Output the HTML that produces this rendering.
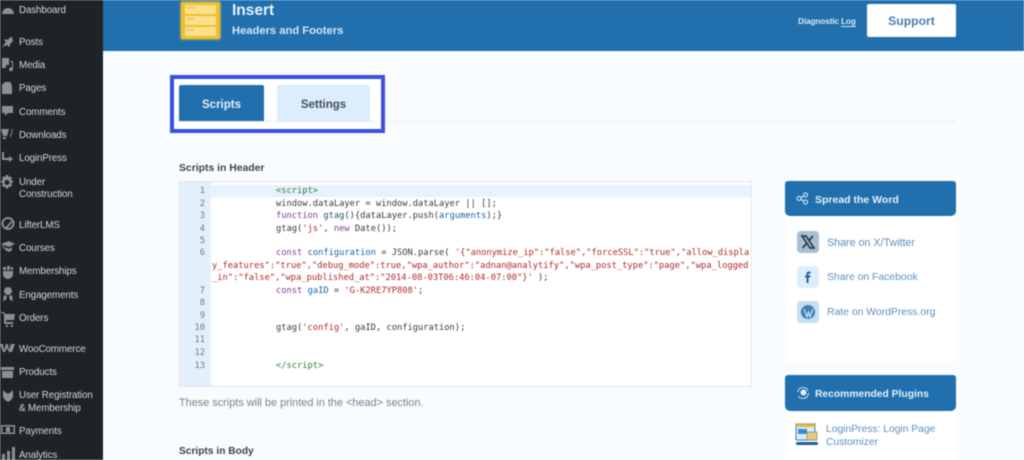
<!DOCTYPE html>
<html><head><meta charset="utf-8"><style>
html,body{margin:0;padding:0}
body{width:1024px;height:460px;overflow:hidden;position:relative;background:#f8fcff;font-family:"Liberation Sans",sans-serif}
#w{position:absolute;left:0;top:0;width:1024px;height:460px;overflow:hidden;filter:blur(.45px)}
.a,.m,.c,.n{position:absolute;white-space:nowrap}
.m{left:19px;color:#d3d6d9;font-size:9.8px;line-height:12px;margin-top:2px;letter-spacing:-.12px}
.c{font-family:"DejaVu Sans Mono","Liberation Mono",monospace;font-size:8.74px;line-height:12px;color:#3a3a3a;margin-top:1px}
.n{left:180px;width:25px;text-align:right;font-family:"DejaVu Sans Mono",monospace;font-size:8.74px;line-height:12px;color:#777;margin-top:1px}
.k{color:#7a3d9a}.d{color:#1a62a8}.s{color:#b02a2a}.t{color:#2a7d3a}.v{color:#256}
.l{position:absolute;left:827px;color:#5b8fc0;font-size:10.6px;line-height:13px;white-space:nowrap}
.ib{position:absolute;left:797px;width:22px;height:22px;border-radius:4px}
</style></head><body><div id="w">
<!-- sidebar -->
<div class="a" style="left:0;top:0;width:103px;height:460px;background:#1d2327"></div>
<div class="m" style="top:3px">Dashboard</div>
<div class="m" style="top:35px">Posts</div>
<div class="m" style="top:58px">Media</div>
<div class="m" style="top:81px">Pages</div>
<div class="m" style="top:105px">Comments</div>
<div class="m" style="top:128px">Downloads</div>
<div class="m" style="top:151px">LoginPress</div>
<div class="m" style="top:175px">Under</div>
<div class="m" style="top:187px">Construction</div>
<div class="m" style="top:218px">LifterLMS</div>
<div class="m" style="top:241px">Courses</div>
<div class="m" style="top:264px">Memberships</div>
<div class="m" style="top:288px">Engagements</div>
<div class="m" style="top:311px">Orders</div>
<div class="m" style="top:342px">WooCommerce</div>
<div class="m" style="top:365px">Products</div>
<div class="m" style="top:388px">User Registration</div>
<div class="m" style="top:401px">&amp; Membership</div>
<div class="m" style="top:424px">Payments</div>
<div class="m" style="top:448px">Analytics</div>
<svg class="a" style="left:0;top:0" width="16" height="460" fill="#8b9096">
<path d="M2 14a6 6 0 1 1 12 0z"/>
<path d="M2 47l4-5-2-2 1-1 2 1 4-3 1 0 1 4-3 3 0 2-1 1-2-2z"/>
<path d="M2 58h7v7H6v3H2zM10 61h3v8a2 2 0 1 1-1-1.500V62h-2z"/>
<path d="M4 82h7v3h1v9H4zM2 84h2v9h6v1H2z" />
<path d="M2 106h11v7H8l-3 3v-3H2z"/>
<path d="M1 129h8l-2 7H3zM3 137h3v2H3zM10 137l2-8h1l-2 8z"/>
<path d="M2 152h2v6h5v-2l4 3-4 3v-2H2z"/>
<path d="M8 175l1 2 2-.5 1 1.500-1 2 2 1v1.500l-2 1 1 2-1 1.500-2-.5-1 2H6l-1-2-2 .5-1-1.500 1-2-2-1V181l2-1-1-2 1-1.500 2 .5 1-2zM7 180a2.500 2.500 0 1 0 .1 0z" fill-rule="evenodd"/>
<path d="M8 217a6.500 6.500 0 1 0 .1 0zm0 2a4.500 4.500 0 1 1-.1 0z" fill-rule="evenodd"/><path d="M5 228l6-7 1 1-5 7z"/>
<path d="M1 244l8-3 6 3-6 3-5-2v4H3v-4zM5 247l4 2 3-2v3l-3 2-4-2z"/>
<path d="M3 267h3v3H3zM7 266h3v4H7zM11 267h2v3h-2zM3 271h10v3a5 5 0 0 1-10 0z"/>
<circle cx="8" cy="291" r="4"/><path d="M4 295l-1 6 3-1 1-4zM12 295l1 6-3-1-1-4z"/>
<path d="M1 312h3l1 2h10l-1 6H6v2h7v2H4v-9L3 313H1zM6 325h2v2H6zM11 325h2v2h-2z"/>
<path d="M0 344h3l1 6 2-6h2l1 6 2-6h4l-3 8h-3l-2-4-2 4H3z"/>
<path d="M1 367h13v3H1zM2 371h11v7H2z"/>
<path d="M3 390l2 2 3 2 3-2 2-2v7l-2 3-3 2-3-2-2-3z"/>
<path d="M1 425h14v9H1zm1.500 1.500v6h11v-6z" fill-rule="evenodd"/><path d="M6 427h4v5H6z"/>
<path d="M2 454h3v6H2zM7 451h3v9H7zM12 447h3v13h-3z"/>
</svg>
<!-- header -->
<div class="a" style="left:103px;top:0;width:921px;height:51px;background:#2170ad"></div>
<div class="a" style="left:181px;top:2px;width:39px;height:37px;border-radius:2px;background:#f1bf2c;box-shadow:0 0 0 1.500px #6d8f85"></div>
<div class="a" style="left:185px;top:5px;width:31px;height:9px;background:#fbe08a;border-radius:1px;color:#8a7a50;font:4px/9px 'Liberation Mono',monospace;text-indent:2px">&lt;/&gt;</div>
<div class="a" style="left:185px;top:16px;width:31px;height:9px;background:#fbe08a;border-radius:1px;color:#8a7a50;font:4px/9px 'Liberation Mono',monospace;text-indent:2px">&lt;/&gt;</div>
<div class="a" style="left:185px;top:27px;width:31px;height:9px;background:#fbe08a;border-radius:1px;color:#8a7a50;font:4px/9px 'Liberation Mono',monospace;text-indent:2px">&lt;/&gt;</div>
<div class="a" style="left:232px;top:2px;color:#e9f2f9;font-size:15.500px;line-height:18px;font-weight:bold">Insert</div>
<div class="a" style="left:232px;top:24px;color:#d5e5f2;font-size:11.200px;line-height:14px;font-weight:bold">Headers and Footers</div>
<div class="a" style="left:798px;top:16px;color:#dbe8f3;font-size:8.200px;line-height:12px;font-weight:bold;letter-spacing:-.1px">Diagnostic <span style="border-bottom:1px solid #dbe8f3">Log</span></div>
<div class="a" style="left:867px;top:4px;width:89px;height:33px;background:#fff;border-radius:2px;color:#4a7fb2;font-size:12.200px;line-height:35px;text-align:center;font-weight:bold">Support</div>
<!-- tabs -->
<div class="a" style="left:385px;top:121px;width:571px;height:1px;background:#e6edf2"></div>
<div class="a" style="left:170px;top:75px;width:207px;height:50px;border:4px solid #3e4fdc;background:#fff"></div>
<div class="a" style="left:178px;top:121px;width:199px;height:1px;background:#e6edf2"></div>
<div class="a" style="left:179px;top:85px;width:85px;height:36px;background:#2170ad;border-radius:2px 2px 0 0;color:#e6f0f8;font-size:11.500px;line-height:40px;text-align:center;font-weight:bold">Scripts</div>
<div class="a" style="left:277px;top:85px;width:93px;height:36px;background:#dcedfd;border-radius:2px 2px 0 0;color:#454d57;font-size:11.500px;line-height:40px;text-align:center;font-weight:bold">Settings</div>
<!-- code -->
<div class="a" style="left:179px;top:162px;color:#3c434a;font-size:10.400px;line-height:14px;font-weight:bold">Scripts in Header</div>
<div class="a" style="left:179px;top:181px;width:571px;height:204px;background:#fff;border:1px solid #dfe6ec"></div>
<div class="a" style="left:180px;top:182px;width:31px;height:204px;background:#e3f0fc"></div>
<div class="a" style="left:211px;top:185px;width:540px;height:12px;background:#e8f2fd"></div>
<div class="n" style="top:184px">1</div><div class="n" style="top:197px">2</div><div class="n" style="top:209px">3</div><div class="n" style="top:222px">4</div><div class="n" style="top:234px">5</div><div class="n" style="top:246px">6</div><div class="n" style="top:284px">7</div><div class="n" style="top:296px">8</div><div class="n" style="top:309px">9</div><div class="n" style="top:321px">10</div><div class="n" style="top:333px">11</div><div class="n" style="top:346px">12</div><div class="n" style="top:359px">13</div>
<div class="c" style="left:276px;top:184px"><span class="t">&lt;script&gt;</span></div>
<div class="c" style="left:276px;top:197px">window.dataLayer = window.dataLayer || [];</div>
<div class="c" style="left:276px;top:209px"><span class="k">function</span> <span class="v">gtag</span>(){dataLayer.push(<span class="d">arguments</span>);}</div>
<div class="c" style="left:276px;top:222px">gtag(<span class="s">'js'</span>, <span class="k">new</span> Date());</div>
<div class="c" style="left:276px;top:246px"><span class="k">const</span> <span class="d">configuration</span> = JSON.parse( <span class="s">'{"anonymize_ip":"false","forceSSL":"true","allow_displa</span></div>
<div class="c" style="left:212px;top:259px"><span class="s">y_features":"true","debug_mode":true,"wpa_author":"adnan@analytify","wpa_post_type":"page","wpa_logged</span></div>
<div class="c" style="left:212px;top:271px"><span class="s">_in":"false","wpa_published_at":"2014-08-03T06:46:04-07:00"}'</span> );</div>
<div class="c" style="left:276px;top:284px"><span class="k">const</span> <span class="d">gaID</span> = <span class="s">'G-K2RE7YP808'</span>;</div>
<div class="c" style="left:276px;top:321px">gtag(<span class="s">'config'</span>, gaID, configuration);</div>
<div class="c" style="left:276px;top:359px"><span class="t">&lt;/script&gt;</span></div>
<div class="a" style="left:179px;top:396px;color:#7a8288;font-size:10.900px;line-height:14px">These scripts will be printed in the &lt;head&gt; section.</div>
<div class="a" style="left:179px;top:445px;color:#3c434a;font-size:10.200px;line-height:14px;font-weight:bold">Scripts in Body</div>
<!-- side 1 -->
<div class="a" style="left:785px;top:216px;width:171px;height:146px;background:#fff"></div>
<div class="a" style="left:785px;top:181px;width:171px;height:35px;background:#2170ad;border-radius:3px 3px 5px 5px"></div>
<svg class="a" style="left:796px;top:192px" width="13" height="13" fill="none" stroke="#e6f0f8" stroke-width="1"><circle cx="3" cy="6.500" r="2"/><circle cx="9.500" cy="3" r="2"/><circle cx="9.500" cy="10" r="2"/><path d="M5 5.500l3-1.500M5 7.500l3 1.500"/></svg>
<div class="a" style="left:815px;top:193px;color:#e6f0f8;font-size:10.500px;line-height:14px;font-weight:bold">Spread the Word</div>
<div class="ib" style="top:231px;background:#a9bfd4"><svg width="22" height="22"><path d="M5 5h4l8 12h-4zM16 5l-4.500 5M10 12l-4.500 5" fill="none" stroke="#2f3c4c" stroke-width="1.700"/></svg></div>
<div class="ib" style="top:266px;background:#dcedfd"><svg width="22" height="22"><path d="M9.500 17v-5.500H8V9.500h1.500V8c0-1.700 1-2.500 2.300-2.500H13.500v2H12.300c-.6 0-.8.300-.8.800v1.200h2l-.3 2h-1.700V17z" fill="#365f8f"/></svg></div>
<div class="ib" style="top:301px;background:#c2dff4"><svg width="22" height="22"><circle cx="11" cy="11" r="7" fill="#3f7fb5"/><path d="M7 8l3 8 1.500-5 1.500 5 3-8" fill="none" stroke="#cfe4f5" stroke-width="1.200"/></svg></div>
<div class="l" style="top:237px;font-size:10.700px">Share on X/Twitter</div>
<div class="l" style="top:271px;font-size:10.400px">Share on Facebook</div>
<div class="l" style="top:306px;font-size:10.400px">Rate on WordPress.org</div>
<!-- side 2 -->
<div class="a" style="left:785px;top:411px;width:171px;height:49px;background:#fff"></div>
<div class="a" style="left:785px;top:375px;width:171px;height:36px;background:#2170ad;border-radius:3px 3px 5px 5px"></div>
<svg class="a" style="left:796px;top:386px" width="14" height="14"><circle cx="7" cy="7" r="5.500" fill="none" stroke="#cfe2f1" stroke-width="1" stroke-dasharray="14 4"/><circle cx="7.500" cy="6.500" r="3" fill="#e6f0f8"/></svg>
<div class="a" style="left:815px;top:388px;color:#e6f0f8;font-size:10.300px;line-height:14px;font-weight:bold">Recommended Plugins</div>
<svg class="a" style="left:795px;top:423px" width="24" height="23"><rect x="1" y="1" width="19" height="16" fill="#dfeaf5" stroke="#3b7db5"/><rect x="1" y="1" width="19" height="3" fill="#e8b93a"/><rect x="3" y="6" width="9" height="5" fill="#2f8fd0"/><rect x="12" y="9" width="10" height="8" fill="#e6c98a" stroke="#8a7a50" stroke-width=".6"/><rect x="1" y="19" width="22" height="3" rx="1.500" fill="#1f5f96"/></svg>
<div class="l" style="left:826px;top:423px;line-height:13px;font-size:10.300px">LoginPress: Login Page<br>Customizer</div>
</div></body></html>
